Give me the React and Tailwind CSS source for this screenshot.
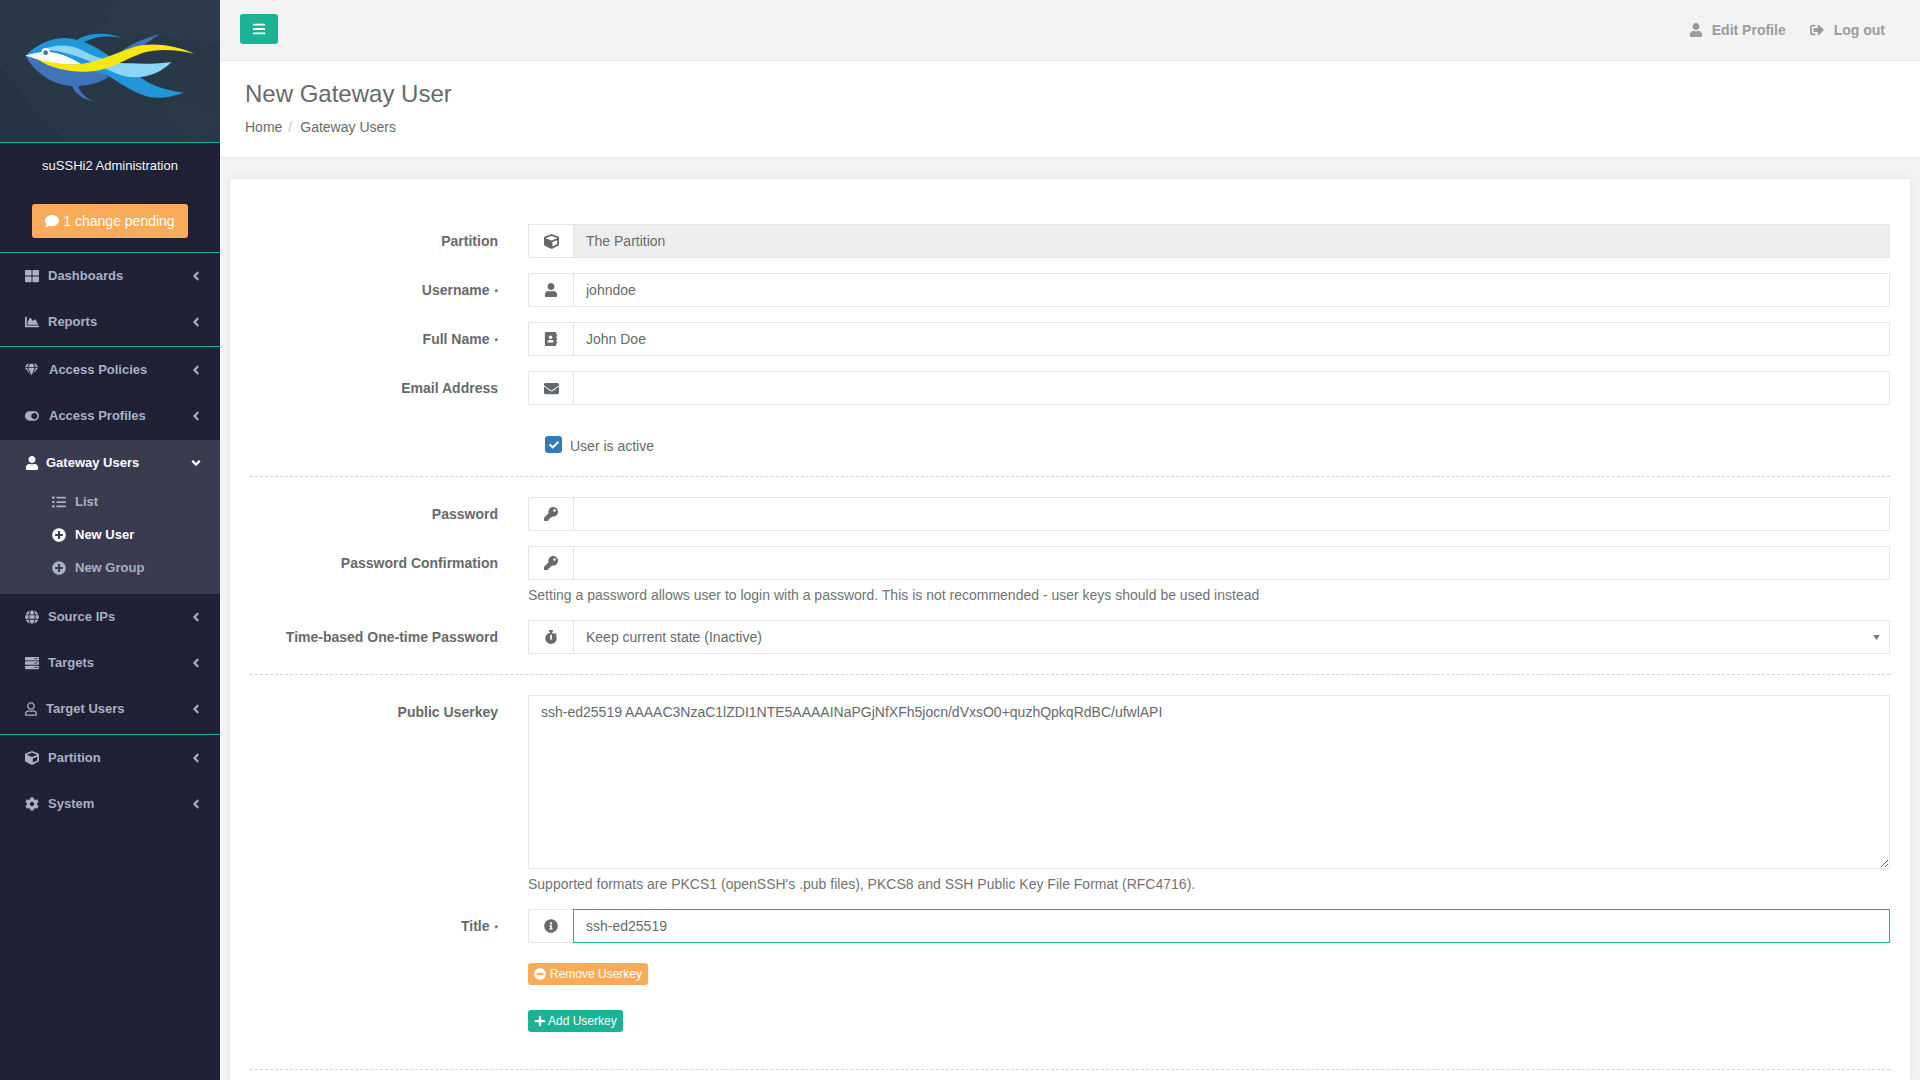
import React from 'react';
import {
  FaThLarge, FaChartArea, FaGem, FaToggleOn, FaUser, FaRegUser, FaListUl, FaPlusCircle, FaMinusCircle,
  FaGlobe, FaServer, FaCube, FaCog, FaAngleLeft, FaAngleDown, FaBars, FaSignOutAlt, FaAddressBook,
  FaEnvelope, FaKey, FaStopwatch, FaInfoCircle, FaPlus, FaComment, FaCheck,
} from 'react-icons/fa';

function Logo() {
  return (
    <svg viewBox="0 0 660 426" className="block w-[220px] h-[142px]">
      <rect width="660" height="426" fill="#283846" />
      <path d="M0 60 L300 90 L360 0 L660 0 L660 130 L300 90 Z" fill="#2b3b49" />
      <path d="M470 280 L660 360 L590 426 Z" fill="#2a3a48" />
      <path d="M0 426 L0 200 L200 426 Z" fill="#273644" />
      {/* top fin */}
      <path d="M228 122 C255 102 310 92 366 113 C325 104 285 108 250 127 Z" fill="#2196d6" />
      {/* rear dark fin */}
      <path d="M350 165 C385 135 430 115 480 102 C455 118 425 140 395 165 Z" fill="#3f74ba" />
      {/* belly */}
      <path d="M76 167 C105 220 165 262 235 258 C275 256 305 245 325 232 L300 200 L120 175 Z" fill="#3f74ba" />
      {/* back and lower tail */}
      <path d="M76 167 C115 130 165 108 215 116 C265 124 300 150 345 178 C390 205 420 235 450 250 C480 265 515 274 551 278 C520 290 480 298 445 290 C400 280 355 245 320 225 L200 190 Z" fill="#2297d8" />
      {/* light stripe */}
      <path d="M125 150 C170 130 215 132 255 155 C300 178 345 190 390 190 C430 192 475 192 514 186 C490 212 450 232 405 232 C360 232 320 205 280 188 C240 172 185 148 125 150 Z" fill="#8dd5f6" />
      {/* white cheek */}
      <path d="M76 167 C105 158 140 152 170 160 C195 166 220 178 243 192 C200 198 150 192 118 180 C100 174 88 170 76 167 Z" fill="#ffffff" />
      {/* yellow ribbon */}
      <path d="M112 178 C160 190 215 198 255 190 C300 182 345 160 395 143 C440 128 510 128 584 161 C530 148 470 145 425 160 C385 174 350 198 300 210 C250 222 165 215 112 178 Z" fill="#f7e70f" />
      <circle cx="137" cy="157" r="13" fill="#ffffff" />
      <circle cx="137" cy="158" r="7" fill="#3f74ba" />
      {/* bottom fin */}
      <path d="M216 258 C225 282 250 298 278 303 C255 292 240 278 235 258 Z" fill="#3f74ba" />
    </svg>
  );
}

function NavItem({ icon: Icon, label, iconClass = 'text-[14px]', width = 'w-[14px]' }) {
  return (
    <div className="h-[46px] flex items-center pl-[25px] pr-[17px] text-[13px] font-bold text-[#a7b1c2]">
      <span className={`${width} flex justify-start -mt-px`}><Icon className={iconClass} /></span>
      <span className="ml-[9px]">{label}</span>
      <FaAngleLeft className="ml-auto text-[14px] -mt-px" />
    </div>
  );
}

function SubItem({ icon: Icon, label, active }) {
  return (
    <div className={`h-[33px] flex items-center pl-[52px] text-[13px] font-bold ${active ? 'text-white' : 'text-[#a7b1c2]'}`}>
      <Icon className="text-[14px] w-[14px]" />
      <span className="ml-[9px]">{label}</span>
    </div>
  );
}

function Sidebar() {
  return (
    <aside className="w-[220px] shrink-0 bg-[#212135]">
      <Logo />
      <div className="border-t border-[#1ab394] h-[110px] flex flex-col items-center">
        <div className="mt-[14px] text-[13px] leading-[18px] text-[#f3f3f4]">suSSHi2 Administration</div>
        <div className="mt-[29px] w-[156px] h-[34px] rounded-[3px] bg-[#f8ac59] text-white text-[14px] flex items-center justify-center gap-[4px]">
          <FaComment className="text-[14px]" />
          <span>1 change pending</span>
        </div>
      </div>
      <div className="border-t border-[#1ab394] pb-px">
        <NavItem icon={FaThLarge} label="Dashboards" />
        <NavItem icon={FaChartArea} label="Reports" />
      </div>
      <div className="border-t border-[#1ab394] pb-[2px]">
        <NavItem icon={FaGem} label="Access Policies" width="w-[15px]" iconClass="text-[13px]" />
        <NavItem icon={FaToggleOn} label="Access Profiles" width="w-[15px]" />
        <div className="bg-[#3b3b50] h-[154px] mt-px">
          <div className="h-[46px] flex items-center pl-[25px] pr-[17px] text-[13px] font-bold text-white">
            <FaUser className="text-[14px] -mt-px" />
            <span className="ml-[7px]">Gateway Users</span>
            <FaAngleDown className="ml-auto text-[14px] -mt-px" />
          </div>
          <div className="-mt-[1px]">
            <SubItem icon={FaListUl} label="List" />
            <SubItem icon={FaPlusCircle} label="New User" active />
            <SubItem icon={FaPlusCircle} label="New Group" />
          </div>
        </div>
        <NavItem icon={FaGlobe} label="Source IPs" />
        <NavItem icon={FaServer} label="Targets" />
        <NavItem icon={FaRegUser} label="Target Users" width="w-[12px]" />
      </div>
      <div className="border-t border-[#1ab394]">
        <NavItem icon={FaCube} label="Partition" />
        <NavItem icon={FaCog} label="System" />
      </div>
    </aside>
  );
}

function Label({ children, required }) {
  return (
    <div className="w-[248px] shrink-0 mr-[30px] h-[34px] flex items-center justify-end font-bold text-[14px] text-[#676a6c]">
      <span>{children}</span>
      {required && <span className="ml-[5px] text-[9px] leading-none relative top-[2px]">*</span>}
    </div>
  );
}

function Addon({ icon: Icon, size = 'text-[14px]' }) {
  return (
    <div className="w-[46px] h-[34px] shrink-0 border border-[#e5e6e7] bg-white flex items-center justify-center text-[#676a6c]">
      <Icon className={size} />
    </div>
  );
}

function Field({ icon, iconSize, label, required, value = '', disabled, focused, className = 'mb-[15px]' }) {
  return (
    <div className={`flex ${className}`}>
      <Label required={required}>{label}</Label>
      <div className="flex flex-1">
        <Addon icon={icon} size={iconSize} />
        <input
          readOnly
          value={value}
          className={`-ml-px flex-1 h-[34px] px-[12px] text-[14px] text-[#676a6c] border outline-none ${disabled ? 'bg-[#eeeeee] border-[#e5e6e7]' : focused ? 'bg-white border-[#1ab394]' : 'bg-white border-[#e5e6e7]'}`}
        />
      </div>
    </div>
  );
}

function Divider({ className }) {
  return <div className={`border-t border-dashed border-[#d5d5d5] ${className}`} />;
}

function Form() {
  return (
    <div className="mx-[10px] mt-[21px] bg-white shadow-[0_0_6px_rgba(0,0,0,0.08)] px-[20px] pt-[45px] flex-1">
      <Field icon={FaCube} iconSize="text-[15px]" label="Partition" value="The Partition" disabled />
      <Field icon={FaUser} label="Username" value="johndoe" required />
      <Field icon={FaAddressBook} label="Full Name" value="John Doe" required />
      <Field icon={FaEnvelope} iconSize="text-[15px]" label="Email Address" />
      <div className="pl-[295px] pt-[16px] flex items-center h-[33px]">
        <span className="w-[17px] h-[17px] rounded-[3px] bg-[#337ab7] flex items-center justify-center">
          <FaCheck className="text-[10px] text-white" />
        </span>
        <span className="ml-[8px] text-[14px] text-[#676a6c] relative top-[2px]">User is active</span>
      </div>
      <Divider className="mt-[23px] mb-[20px]" />
      <Field icon={FaKey} label="Password" />
      <Field icon={FaKey} label="Password Confirmation" className="mb-0" />
      <div className="pl-[278px] mt-[5px] h-[35px] text-[14px] leading-[20px] text-[#737373]">
        Setting a password allows user to login with a password. This is not recommended - user keys should be used instead
      </div>
      <div className="flex">
        <Label>Time-based One-time Password</Label>
        <div className="flex flex-1 relative">
          <Addon icon={FaStopwatch} />
          <select className="-ml-px flex-1 h-[34px] pl-[12px] text-[14px] text-[#676a6c] border border-[#e5e6e7] bg-white rounded-none appearance-none outline-none">
            <option>Keep current state (Inactive)</option>
          </select>
          <svg viewBox="0 0 8 6" className="absolute right-[10px] top-[15px] w-[7px] h-[5px]">
            <path d="M0 0 H8 L4 6 Z" fill="#777777" />
          </svg>
        </div>
      </div>
      <Divider className="mt-[20px] mb-[20px]" />
      <div className="flex">
        <Label>Public Userkey</Label>
        <textarea
          readOnly
          value="ssh-ed25519 AAAAC3NzaC1lZDI1NTE5AAAAINaPGjNfXFh5jocn/dVxsO0+quzhQpkqRdBC/ufwlAPI"
          className="flex-1 h-[174px] px-[12px] py-[6px] text-[14px] leading-[20px] text-[#676a6c] border border-[#e5e6e7] outline-none resize-y"
        />
      </div>
      <div className="pl-[278px] mt-[5px] h-[35px] text-[14px] leading-[20px] text-[#737373]">
        Supported formats are PKCS1 (openSSH's .pub files), PKCS8 and SSH Public Key File Format (RFC4716).
      </div>
      <Field icon={FaInfoCircle} label="Title" value="ssh-ed25519" required focused className="mb-[20px]" />
      <div className="pl-[278px] flex">
        <div className="flex items-center h-[22px] px-[6px] gap-[4px] rounded-[3px] bg-[#f8ac59] text-white text-[12px]">
          <FaMinusCircle className="text-[12px]" />
          <span>Remove Userkey</span>
        </div>
      </div>
      <div className="pl-[278px] mt-[25px] flex">
        <div className="flex items-center h-[22px] px-[6px] gap-[2px] rounded-[3px] bg-[#1ab394] text-white text-[12px]">
          <FaPlus className="text-[12px]" />
          <span>Add Userkey</span>
        </div>
      </div>
      <Divider className="mt-[37px]" />
    </div>
  );
}

export default function App() {
  return (
    <div className="h-screen overflow-hidden flex bg-[#f3f3f4] text-[#676a6c]" style={{ fontFamily: '"Liberation Sans", Arial, sans-serif' }}>
      <Sidebar />
      <main className="flex-1 flex flex-col min-w-0">
        <header className="h-[61px] shrink-0 border-b border-[#e7eaec] flex items-center pl-[20px] pr-[35px]">
          <div className="w-[38px] h-[30px] -mt-[2px] rounded-[3px] bg-[#1ab394] text-white flex items-center justify-center">
            <FaBars className="text-[14px]" />
          </div>
          <div className="ml-auto flex items-center text-[14px] font-bold text-[#999c9e]">
            <FaUser className="text-[14px]" />
            <span className="ml-[9px]">Edit Profile</span>
            <FaSignOutAlt className="ml-[24px] text-[14px]" />
            <span className="ml-[10px]">Log out</span>
          </div>
        </header>
        <div className="h-[97px] shrink-0 bg-white border-b border-[#e7eaec] pl-[25px]">
          <h2 className="mt-[20px] text-[24px] leading-[26px] font-normal">New Gateway User</h2>
          <div className="mt-[10px] text-[14px] leading-[20px] flex">
            <span>Home</span>
            <span className="ml-[6px] text-[#cccccc]">/</span>
            <span className="ml-[8px]">Gateway Users</span>
          </div>
        </div>
        <Form />
      </main>
    </div>
  );
}
